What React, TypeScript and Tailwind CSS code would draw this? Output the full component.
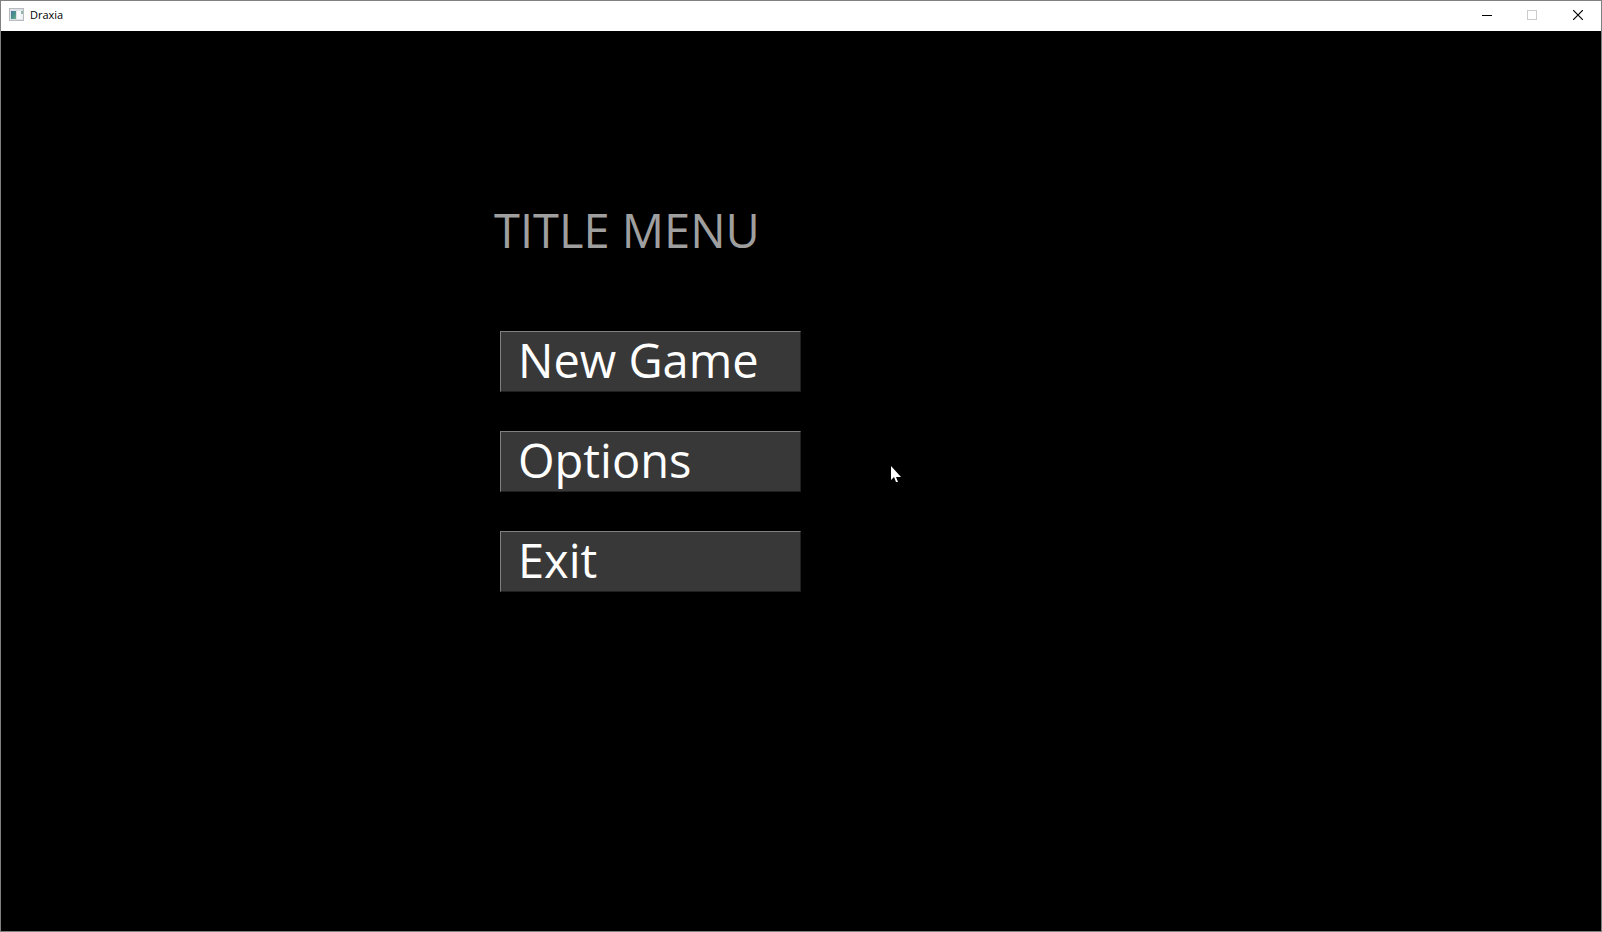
const menuItems = ["New Game", "Options", "Exit"];

function AppIcon() {
  return (
    <svg width="16" height="16" viewBox="0 0 16 16" shapeRendering="crispEdges" aria-hidden="true">
      <defs>
        <linearGradient id="pane" x1="0" y1="0" x2="1" y2="1">
          <stop offset="0" stopColor="#4a76a0" />
          <stop offset="0.5" stopColor="#47908c" />
          <stop offset="1" stopColor="#6fae8c" />
        </linearGradient>
      </defs>
      <rect x="0" y="1" width="15" height="13" fill="#b8bcc0" />
      <rect x="1" y="2" width="13" height="11" fill="#dfe3e7" />
      <rect x="2" y="4" width="5" height="8" fill="url(#pane)" />
      <rect x="8" y="4" width="4" height="8" fill="#f6f8fa" />
      <rect x="12" y="4" width="2" height="3" fill="#8fb7a8" />
      <rect x="12" y="7" width="2" height="5" fill="#eef1f3" />
    </svg>
  );
}

function TitleBar() {
  return (
    <header className="flex h-[30px] items-center bg-white pb-0.5">
      <div className="flex flex-1 items-center gap-[5px] pl-2">
        <AppIcon />
        <span className="font-['Open_Sans',sans-serif] text-[11px] leading-4 text-black">Draxia</span>
      </div>
      <div className="flex h-full">
        <button type="button" aria-label="Minimize" className="flex w-[45px] items-center justify-center">
          <svg width="10" height="10" viewBox="0 0 10 10" shapeRendering="crispEdges">
            <path d="M0 5h10v1H0z" fill="#000" />
          </svg>
        </button>
        <button type="button" aria-label="Maximize" disabled className="flex w-[45px] items-center justify-center">
          <svg width="10" height="10" viewBox="0 0 10 10" shapeRendering="crispEdges">
            <rect x="0.5" y="0.5" width="9" height="9" fill="none" stroke="#ccc" />
          </svg>
        </button>
        <button type="button" aria-label="Close" className="flex w-[47px] items-center justify-center">
          <svg width="10" height="10" viewBox="0 0 10 10">
            <path d="M0 0l10 10M10 0L0 10" fill="none" stroke="#000" strokeWidth="1.2" />
          </svg>
        </button>
      </div>
    </header>
  );
}

function Cursor() {
  return (
    <svg className="absolute left-[889px] top-[435px]" width="12" height="18" viewBox="0 0 12 18" aria-hidden="true">
      <path d="M1 0v14l3-3 2 5h2l-2-5h5z" fill="#fff" />
    </svg>
  );
}

export default function App() {
  return (
    <div className="flex min-h-screen flex-col border border-[#808080] bg-black">
      <TitleBar />
      <main className="relative flex-1 font-['Open_Sans',sans-serif] text-[47px] leading-[56px]">
        <div className="flex w-1/2 justify-end pt-[171px]">
          <div className="w-[307px]">
            <h1 className="whitespace-nowrap text-[#9f9f9f]">TITLE MENU</h1>
            <nav className="flex flex-col gap-[39px] pl-[6px] pt-[73px]">
              {menuItems.map((label) => (
                <button
                  key={label}
                  type="button"
                  className="h-[61px] whitespace-nowrap border border-b-[#202020] border-l-[#808080] border-r-[#202020] border-t-[#808080] bg-[#383838] pb-[3px] pl-[17px] text-left text-white"
                >
                  {label}
                </button>
              ))}
            </nav>
          </div>
        </div>
        <Cursor />
      </main>
    </div>
  );
}
